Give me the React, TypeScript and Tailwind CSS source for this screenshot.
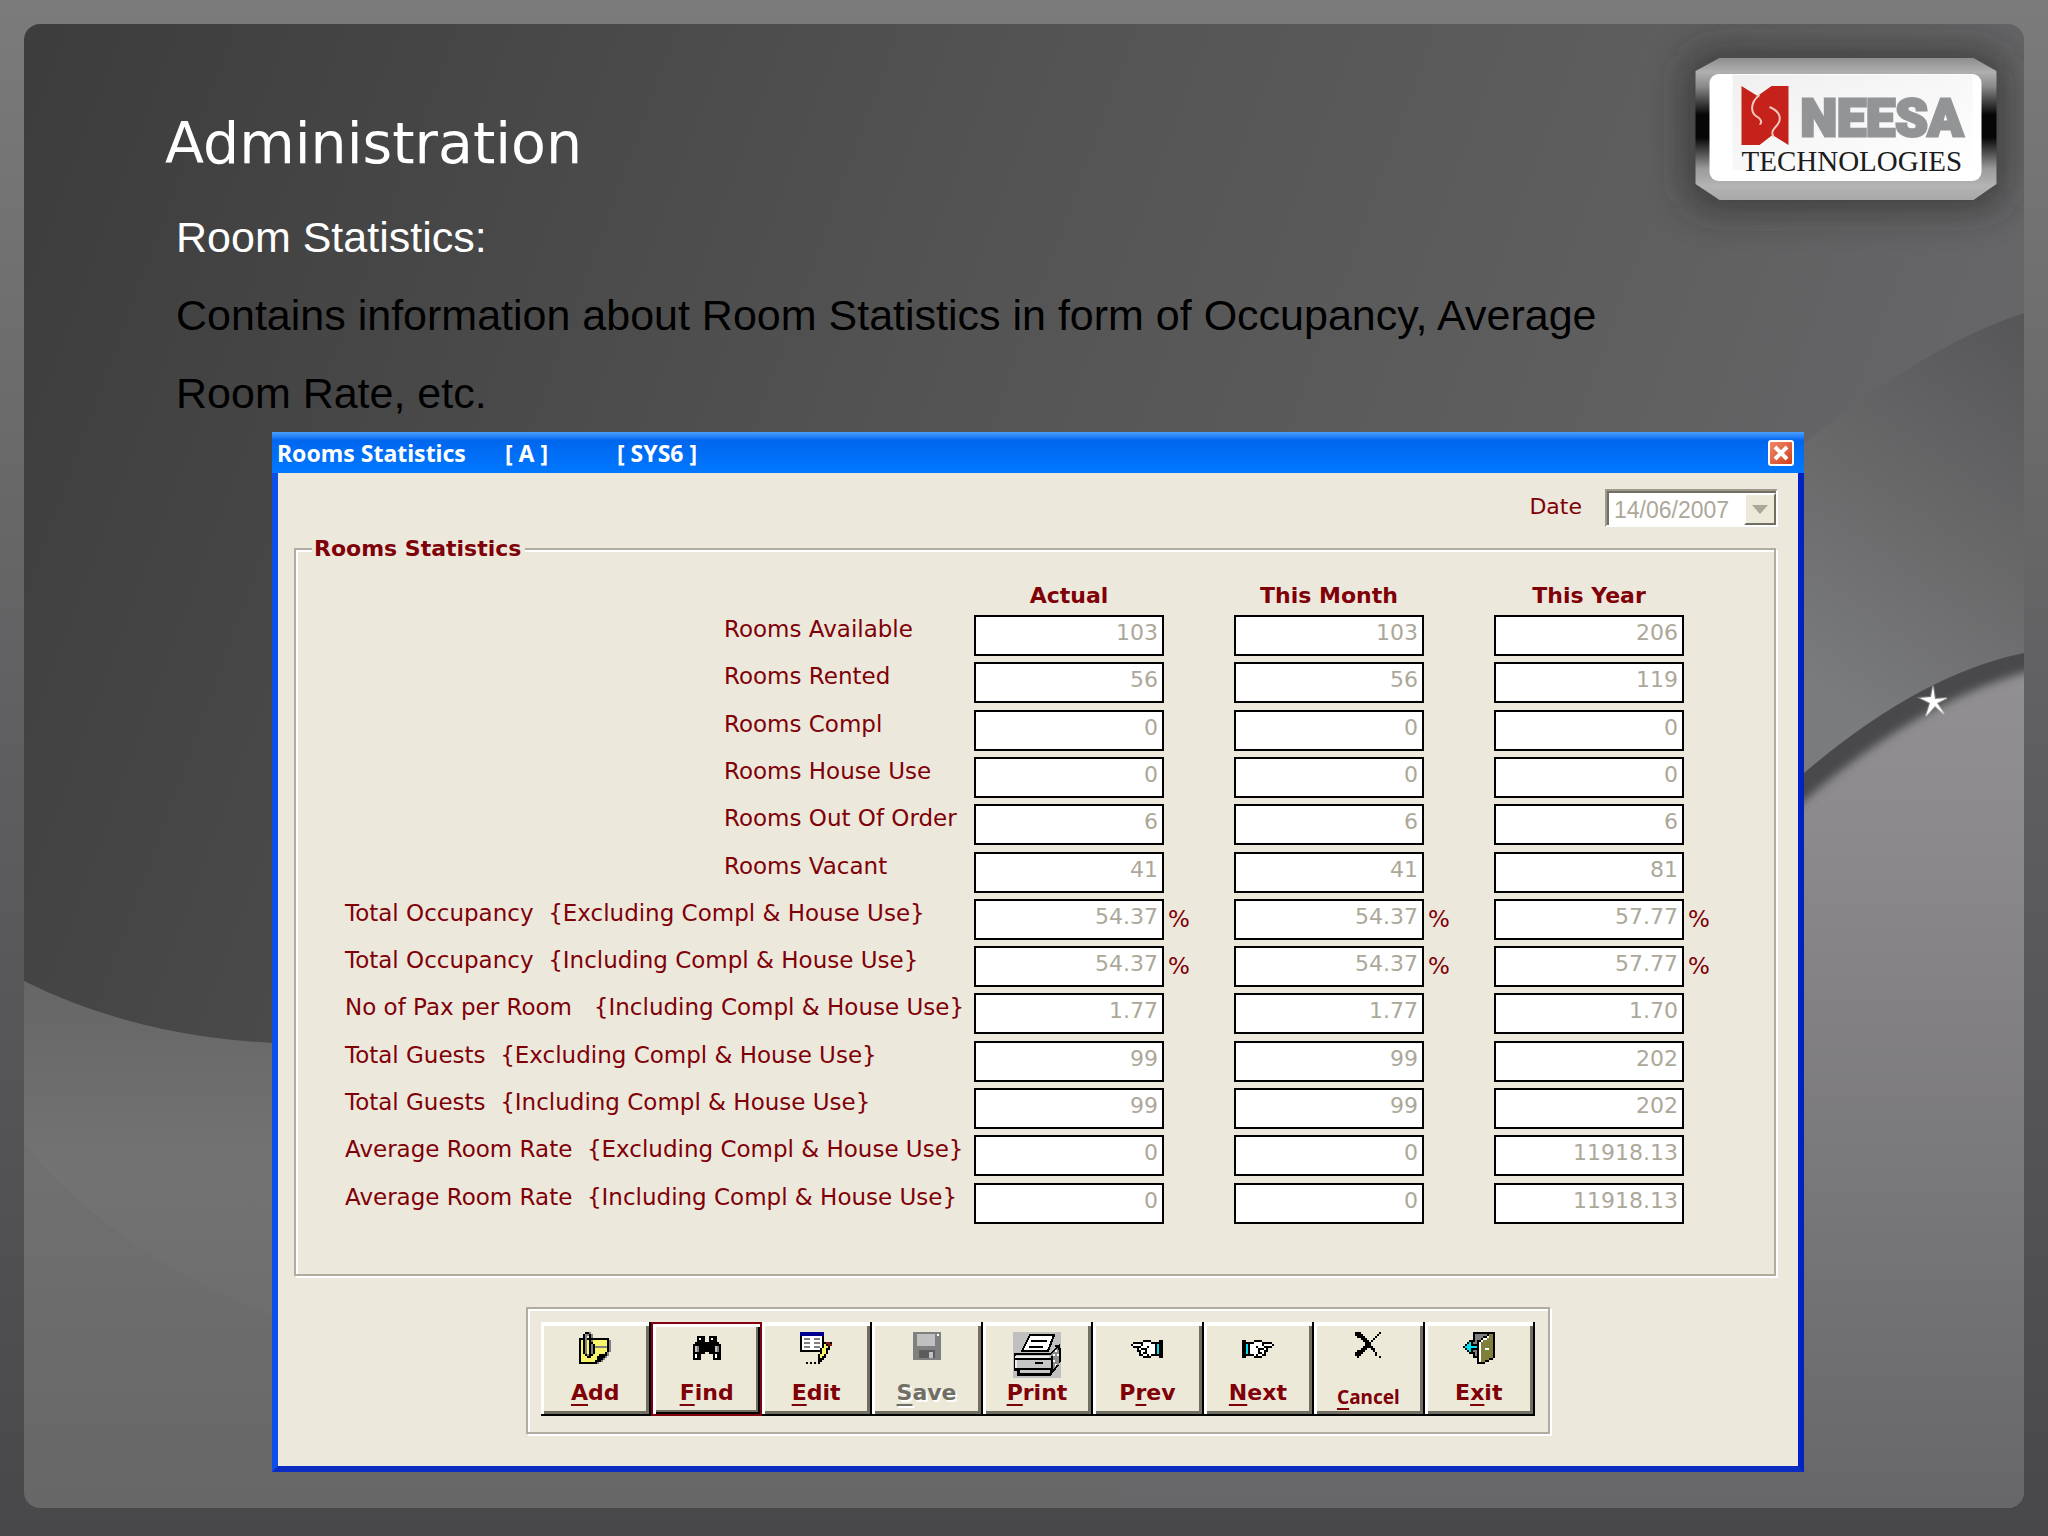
import React, { ReactNode } from "react";

import { clsx } from "clsx";

type StatRow = {
	label: string;
	indent?: boolean;
	percent?: boolean;
	values: [string, string, string];
};

const COLUMNS = ["Actual", "This Month", "This Year"];

const ROWS: StatRow[] = [
	{ label: "Rooms Available", indent: true, values: ["103", "103", "206"] },
	{ label: "Rooms Rented", indent: true, values: ["56", "56", "119"] },
	{ label: "Rooms Compl", indent: true, values: ["0", "0", "0"] },
	{ label: "Rooms House Use", indent: true, values: ["0", "0", "0"] },
	{ label: "Rooms Out Of Order", indent: true, values: ["6", "6", "6"] },
	{ label: "Rooms Vacant", indent: true, values: ["41", "41", "81"] },
	{
		label: "Total Occupancy  {Excluding Compl & House Use}",
		percent: true,
		values: ["54.37", "54.37", "57.77"],
	},
	{
		label: "Total Occupancy  {Including Compl & House Use}",
		percent: true,
		values: ["54.37", "54.37", "57.77"],
	},
	{ label: "No of Pax per Room   {Including Compl & House Use}", values: ["1.77", "1.77", "1.70"] },
	{ label: "Total Guests  {Excluding Compl & House Use}", values: ["99", "99", "202"] },
	{ label: "Total Guests  {Including Compl & House Use}", values: ["99", "99", "202"] },
	{ label: "Average Room Rate  {Excluding Compl & House Use}", values: ["0", "0", "11918.13"] },
	{ label: "Average Room Rate  {Including Compl & House Use}", values: ["0", "0", "11918.13"] },
];

const PALETTE: Record<string, string> = {
	K: "#000000",
	W: "#ffffff",
	Y: "#f8f46a",
	G: "#808080",
	L: "#c0c0c0",
	B: "#000090",
	R: "#8b1a10",
	C: "#00e0f0",
	O: "#80803c",
};

const ADD_ICON = [
	"...KKG..........",
	"..KGGKG.........",
	"..KG.KG.........",
	"KKKGKKKKKKKKKKK.",
	"KYKGYKGYYYYYYYKG",
	"KYKGYKKYYYYYYYKG",
	"KYKGYKGKYYYYYYKG",
	"KYKGYKGKGGGGGGKG",
	"KYKGYKGKYYYYYYKG",
	"KYKGYKGKYYYYYYKG",
	"KYKGYKGKYYYYYKG.",
	"KYYKGKKYYYKKKKG.",
	"KYYYKKYYYKKKKG..",
	"KYYYYYYYYKKKG...",
	"KYYYYYYYKKKG....",
	"KKKKKKKKKG......",
];

const FIND_ICON = [
	"..KKKK..KKKK..",
	"..KWKK..KWKK..",
	"..KKKK..KKKK..",
	".KKKKKKKKKKKK.",
	"KKKKKKKKKKKKKK",
	"KLGKKKKKKKKLGK",
	"KLGKKKKKKKKLGK",
	"KLGKKKKKKKKLGK",
	"KKKKKK..KKKKKK",
	"KWKK......KWKK",
	"KWKK......KWKK",
	"KKKK......KKKK",
];

const EDIT_ICON = [
	"BBBBBBBBBBBB....",
	"BBBBBBBBBBBB....",
	"KWWWWWWWWWWK....",
	"KWGGGWWGGGWK....",
	"KWWWWWWWWWWK....",
	"KWGGGWWGGGWKKRRK",
	"KWWWWWWWWWWKYKRR",
	"KWGGGWWGGGWKYYK.",
	"KWWWWWWWWWKYYKK.",
	"KKKKKKKKKKKYYK..",
	"..........KYYK..",
	".........KYYK...",
	".........KYKK...",
	".........KKK....",
	".........KK.....",
	"...K.K.K.K......",
];

const SAVE_ICON = [
	"GGGGGGGGGGGGGG",
	"GGLLLLLLLLLGWG",
	"GGLLLLLLLLLGGG",
	"GGLLLLLLLLLGGG",
	"GGLLLLLLLLLGGG",
	"GGLLLLLLLLLGGG",
	"GGLLLLLLLLLGGG",
	"GGGGGGGGGGGGGG",
	"GGGGGGGGGGGGGG",
	"GGGKKKKKKKKGGG",
	"GGGKKKKKLLKGGG",
	"GGGKKKKKLLKGGG",
	"GGGKKKKKLLKGGG",
	"GGGGGGGGGGGGGG",
].map((row) => row.replace(/K/g, "D"));

PALETTE.D = "#5c5c5c";

const PREV_ICON = [
	"......KKKK....KK",
	".KKKKKWWWWKKKKKK",
	"KWWWWKWWWWWWKCKK",
	".KKKKWWWKWWWKCKK",
	"...KWKKKWWWWKCKK",
	"...KKWWKWWWWKCKK",
	"....KWKKWWWWKCKK",
	"....KKWWKWKKKKKK",
	"......KKKK....KK",
];

const NEXT_ICON = PREV_ICON.map((row) => row.split("").reverse().join(""));

const CANCEL_ICON = [
	"KKK.........K",
	"KKKK.......K.",
	".KKKK.....K..",
	"...KKK...K...",
	"....KKK.K....",
	".....KKK.....",
	".....KKK.....",
	"....KKKKK....",
	"...KKK..KK...",
	".KKKK....K...",
	"KKKK......K..",
	"KKK.......K..",
	".K..........K",
];

const EXIT_ICON = [
	".....KKKKKKKKKKK",
	".....KGGGGGGKOOK",
	".....KGGGGKKWOOK",
	".....KGGGKWWOOOK",
	"...KKKGKKWOOOOOK",
	"..KCKGGKWOOOOOOK",
	".KCCKKKKWOOOOOOK",
	"KCCCCCCKWOOOOOOK",
	".KCCKKKKWOOWWOOK",
	"..KCKGGKWOOOOOOK",
	"...KKKGKWOOOOOOK",
	".....KGKWOOOOOOK",
	".....KKKWOOOOOOK",
	".......KWOOOOKK.",
	".......KWOOKK...",
	".......KKKK.....",
];

function PixelIcon({ rows }: { rows: string[] }) {
	const width = rows[0].length;

	return (
		<svg
			width={width * 2}
			height={rows.length * 2}
			viewBox={`0 0 ${width} ${rows.length}`}
			shapeRendering="crispEdges"
			aria-hidden="true"
		>
			{rows.map((row, y) =>
				row
					.split("")
					.map((char, x) =>
						PALETTE[char] ? (
							<rect key={`${x}-${y}`} x={x} y={y} width="1" height="1" fill={PALETTE[char]} />
						) : null,
					),
			)}
		</svg>
	);
}

function PrinterIcon() {
	return (
		<svg width="48" height="46" viewBox="0 0 24 23" shapeRendering="crispEdges" aria-hidden="true">
			<path d="M0 0h24v23H0z" fill="#c0c0c0" />
			<path d="M1 11h18l4-4v8l-4 4v2H3v-2H1z" fill="#c6c6c6" stroke="#000" />
			<path d="M19 11l4-4v9l-4 5z" fill="#8c8c8c" />
			<path d="M20 11h1v1h-1zM21 9h1v1h-1zM22 11h1v1h-1zM20 14h1v1h-1zM21 16h1v1h-1z" fill="#fff" />
			<path d="M8.5 1.5h12l-3 8h-13z" fill="#fff" stroke="#000" />
			<path d="M9 4.5h8M8 7.5h7M11 15.5h4M1 13.5h18M1 18.5h18M19.5 12v8" stroke="#000" fill="none" />
			<path d="M21 7h2v2M23.5 8v7M2.5 18v3.5h16l4-5" stroke="#000" fill="none" />
			<path d="M1 12.5h17M1.5 14v4" stroke="#ededed" fill="none" />
		</svg>
	);
}

type ToolButtonProps = {
	before?: string;
	accessKey: string;
	after: string;
	icon: ReactNode;
	active?: boolean;
	disabled?: boolean;
	compact?: boolean;
};

function ToolButton({ before, accessKey, after, icon, active, disabled, compact }: ToolButtonProps) {
	return (
		<button
			type="button"
			disabled={disabled}
			className={clsx(
				"flex h-[94px] flex-col items-center bg-[#ece9d8] font-['DejaVu_Sans',sans-serif] font-bold",
				active
					? "border-2 border-[#800010] pt-2 shadow-[inset_3px_3px_0_#fff,inset_-2px_-2px_0_#000,inset_-4px_-4px_0_#716f64]"
					: "border-r-2 border-b-2 border-black pt-[10px] shadow-[inset_3px_4px_0_#fff,inset_-3px_-3px_0_#716f64]",
				disabled ? "text-[#716f64] [text-shadow:2px_2px_0_#fff]" : "text-[#800008]",
			)}
		>
			<span className="flex h-12 items-start">{icon}</span>
			<span
				className={clsx(
					compact
						? "font-['Noto_Sans',sans-serif] text-[19px] leading-[34px]"
						: "text-[22px] leading-[26px]",
				)}
			>
				{before}
				<span className="underline decoration-2 underline-offset-4">{accessKey}</span>
				{after}
			</span>
		</button>
	);
}

function Toolbar() {
	return (
		<div className="mx-auto mt-[31px] w-full max-w-[1024px] border-2 border-[#b0ada0] px-[13px] pt-[13px] pb-4 shadow-[inset_2px_2px_0_#fff,2px_2px_0_#fff]">
			<div role="toolbar" aria-label="Record actions" className="grid grid-cols-9">
				<ToolButton accessKey="A" after="dd" icon={<PixelIcon rows={ADD_ICON} />} />
				<ToolButton
					accessKey="F"
					after="ind"
					active
					icon={
						<span className="pt-1">
							<PixelIcon rows={FIND_ICON} />
						</span>
					}
				/>
				<ToolButton accessKey="E" after="dit" icon={<PixelIcon rows={EDIT_ICON} />} />
				<ToolButton accessKey="S" after="ave" disabled icon={<PixelIcon rows={SAVE_ICON} />} />
				<ToolButton accessKey="P" after="rint" icon={<PrinterIcon />} />
				<ToolButton
					before="P"
					accessKey="r"
					after="ev"
					icon={
						<span className="pt-2">
							<PixelIcon rows={PREV_ICON} />
						</span>
					}
				/>
				<ToolButton
					accessKey="N"
					after="ext"
					icon={
						<span className="pt-2">
							<PixelIcon rows={NEXT_ICON} />
						</span>
					}
				/>
				<ToolButton accessKey="C" after="ancel" compact icon={<PixelIcon rows={CANCEL_ICON} />} />
				<ToolButton before="E" accessKey="x" after="it" icon={<PixelIcon rows={EXIT_ICON} />} />
			</div>
		</div>
	);
}

function StatsTable() {
	return (
		<table className="mt-[19px] mr-5 mb-11 block text-[22px]">
			<thead className="block">
				<tr className="grid grid-cols-[1fr_260px_260px_260px] leading-[30px]">
					<td />
					{COLUMNS.map((column) => (
						<th key={column} scope="col" className="w-[190px] text-center font-bold">
							{column}
						</th>
					))}
				</tr>
			</thead>
			<tbody className="mt-1 grid h-[615px] auto-rows-fr">
				{ROWS.map((row) => (
					<tr key={row.label} className="grid grid-cols-[1fr_260px_260px_260px]">
						<th
							scope="row"
							className={clsx(
								"text-left text-[23px] leading-7 font-normal whitespace-pre",
								row.indent ? "pl-[428px]" : "pl-[49px]",
							)}
						>
							{row.label}
						</th>
						{row.values.map((value, i) => (
							<td key={COLUMNS[i]} className="flex items-start gap-1">
								<input
									type="text"
									disabled
									defaultValue={value}
									aria-label={`${row.label}, ${COLUMNS[i]}`}
									className="h-[41px] w-[190px] border-2 border-black bg-white pr-1 pb-1.5 text-right text-[#aca899]"
								/>
								{row.percent && <span className="text-[23px] leading-[41px]">%</span>}
							</td>
						))}
					</tr>
				))}
			</tbody>
		</table>
	);
}

function StatsWindow() {
	return (
		<section className="mr-[220px] mb-9 ml-[248px] border-x-[6px] border-b-[6px] border-r-[#0022c0] border-b-[#0a2cc0] border-l-[#0c50e8] bg-[#ece9dc]">
			<div className="-mx-[6px] flex h-[41px] items-center justify-between bg-linear-to-b from-[#4aa0ff] via-[#0066ee] via-20% to-[#0078ff] pr-[10px] pl-[5px]">
				<h2 className="flex font-['Noto_Sans',sans-serif] text-[23px] leading-7 font-bold text-white">
					<span className="w-[228px]">Rooms Statistics</span>
					<span className="w-[112px]">[ A ]</span>
					<span>[ SYS6 ]</span>
				</h2>
				<button
					type="button"
					aria-label="Close"
					className="flex size-[26px] items-center justify-center rounded-[3px] border-2 border-white bg-linear-to-br from-[#f08868] to-[#d03c10]"
				>
					<svg width="16" height="16" viewBox="0 0 16 16" aria-hidden="true">
						<path d="M2 2l12 12M14 2L2 14" stroke="#fff" strokeWidth="4" />
					</svg>
				</button>
			</div>

			<div className="pt-4 pb-8 font-['DejaVu_Sans',sans-serif] text-[#800008]">
				<div className="mr-5 flex items-start justify-end gap-[23px]">
					<label htmlFor="stat-date" className="text-[22px] leading-9">
						Date
					</label>
					<div className="relative flex h-[38px] w-[173px] border-2 border-t-[#9d9a8c] border-r-white border-b-white border-l-[#9d9a8c]">
						<select
							id="stat-date"
							disabled
							className="w-full appearance-none border-t-2 border-l-2 border-[#716f64] bg-white pl-[5px] font-['Liberation_Sans',sans-serif] text-[23px] text-[#aca899] opacity-100"
						>
							<option>14/06/2007</option>
						</select>
						<span className="pointer-events-none absolute top-[2px] right-0 bottom-0 flex w-8 items-center justify-center border-2 border-t-white border-r-[#716f64] border-b-[#716f64] border-l-white bg-[#ece9d8]">
							<svg width="16" height="9" viewBox="0 0 16 9" aria-hidden="true">
								<path d="M0 0h16L8 9z" fill="#aca899" />
							</svg>
						</span>
					</div>
				</div>

				<fieldset className="mt-[9px] mr-[22px] ml-4 border-2 border-[#b0ada0] shadow-[inset_2px_2px_0_#fff,2px_2px_0_#fff]">
					<legend className="ml-4 bg-[#ece9dc] pr-1 pl-[2px] text-[22px] leading-[26px] font-bold">
						Rooms Statistics
					</legend>
					<StatsTable />
				</fieldset>

				<Toolbar />
			</div>
		</section>
	);
}

function Logo() {
	return (
		<svg
			width="302"
			height="142"
			viewBox="0 0 301 142"
			className="overflow-visible"
			role="img"
			aria-label="Neesa Technologies"
		>
			<defs>
				<linearGradient id="metal" x1="0" y1="0" x2="0" y2="1">
					<stop offset="0" stopColor="#8e8e8e" />
					<stop offset="0.1" stopColor="#b0b0b0" />
					<stop offset="0.2" stopColor="#8a8a8a" />
					<stop offset="0.4" stopColor="#060606" />
					<stop offset="0.56" stopColor="#060606" />
					<stop offset="0.78" stopColor="#9a9a9a" />
					<stop offset="0.9" stopColor="#b4b4b4" />
					<stop offset="1" stopColor="#a8a8a8" />
				</linearGradient>
				<linearGradient id="plate" x1="0" y1="0" x2="1" y2="1">
					<stop offset="0" stopColor="#f0f0f0" />
					<stop offset="1" stopColor="#ffffff" />
				</linearGradient>
				<filter id="logo-shadow" x="-30%" y="-50%" width="160%" height="200%">
					<feGaussianBlur stdDeviation="20" />
				</filter>
			</defs>
			<rect
				x="-6"
				y="-4"
				width="313"
				height="152"
				rx="20"
				fill="#262626"
				opacity="0.7"
				filter="url(#logo-shadow)"
			/>
			<path d="M24 0h254l23 13v113l-23 16H24L0 126V13z" fill="url(#metal)" />
			<rect x="14" y="16" width="272" height="107" rx="9" fill="#fff" />
			<path d="M37 17h240v95H37z" fill="url(#plate)" />
			<path d="M46 28l16 10 14-10h17v59l-16-10-13 10H46z" fill="#c4221a" />
			<path
				d="M64 37c-10 8-9 18-2 22 5 3 4 7 2 7M74 49c10 4 14 12 6 20-6 6-2 8-2 10"
				fill="none"
				stroke="#f4c9c0"
				strokeWidth="2"
			/>
			<text
				x="105"
				y="78"
				fontFamily="Roboto, sans-serif"
				fontSize="52"
				fontWeight="900"
				fill="#929496"
				stroke="#929496"
				strokeWidth="3"
			>
				NEESA
			</text>
			<text x="46" y="113" fontFamily="'Liberation Serif', serif" fontSize="29" fill="#1c1c1c">
				TECHNOLOGIES
			</text>
		</svg>
	);
}

// Soft swooshes behind the slide content
function Backdrop() {
	return (
		<svg
			className="absolute inset-0 size-full"
			viewBox="0 0 2000 1484"
			preserveAspectRatio="none"
			aria-hidden="true"
		>
			<defs>
				<linearGradient id="slate" gradientUnits="userSpaceOnUse" x1="0" y1="100" x2="1800" y2="760">
					<stop offset="0" stopColor="#3d3d3d" />
					<stop offset="0.5" stopColor="#545454" />
					<stop offset="1" stopColor="#666567" />
				</linearGradient>
				<linearGradient id="floor" x1="0" y1="0" x2="0" y2="1">
					<stop offset="0" stopColor="#666666" />
					<stop offset="0.35" stopColor="#737373" />
					<stop offset="1" stopColor="#676768" />
				</linearGradient>
				<linearGradient
					id="arc"
					gradientUnits="userSpaceOnUse"
					x1="1990"
					y1="300"
					x2="1760"
					y2="640"
				>
					<stop offset="0" stopColor="#575658" />
					<stop offset="1" stopColor="#7a7b7c" />
				</linearGradient>
				<linearGradient id="hill" x1="0" y1="0" x2="0" y2="1">
					<stop offset="0" stopColor="#929092" />
					<stop offset="0.2" stopColor="#8c8a8c" />
					<stop offset="1" stopColor="#676668" />
				</linearGradient>
				<filter id="soften">
					<feGaussianBlur stdDeviation="4" />
				</filter>
			</defs>
			<path d="M0 0h2000v1484H0z" fill="url(#slate)" />
			<path d="M0 957q110 55 248 62l900 0v465H0z" fill="url(#floor)" />
			<path d="M0 1120q90 110 248 172v192H0z" fill="#686868" opacity="0.25" />
			<path d="M1100 1484V1200L1780 755Q1890 650 2000 632v852z" fill="url(#hill)" />
			<path
				d="M1740 775L1780 735Q1896 640 2020 615V643Q1900 672 1780 777L1740 815z"
				fill="#4a494b"
				filter="url(#soften)"
			/>
			<path d="M1600 590Q1830 345 2000 289V629Q1896 650 1780 749L1600 900z" fill="url(#arc)" />
			<path
				d="M1909 662l2 13 12-1-10 5 7 11-9-8-9 10 4-13-10-5 11-1z"
				fill="#fff"
				stroke="#fff"
				strokeOpacity="0.3"
				strokeWidth="2"
			/>
		</svg>
	);
}

export default function App() {
	return (
		<div className="flex min-h-screen bg-linear-to-b from-[#7b7b7b] via-[#5e5d5f] via-50% to-[#484749] px-6 pt-6 pb-7">
			<main className="relative flex-1 overflow-hidden rounded-2xl">
				<Backdrop />
				<div className="relative">
					<header className="flex h-[174px] items-start justify-between pt-[34px] pr-[27px] pl-[141px]">
						<h1 className="mt-[49px] font-['DejaVu_Sans',sans-serif] text-[57px] leading-[72px] text-white">
							Administration
						</h1>
						<Logo />
					</header>
					<div className="ml-[152px] max-w-[1480px] font-['Liberation_Sans',sans-serif] text-[43px] leading-[78px] text-black">
						<p className="text-white">Room Statistics:</p>
						<p>Contains information about Room Statistics in form of Occupancy, Average Room Rate, etc.</p>
					</div>
					<StatsWindow />
				</div>
			</main>
		</div>
	);
}
